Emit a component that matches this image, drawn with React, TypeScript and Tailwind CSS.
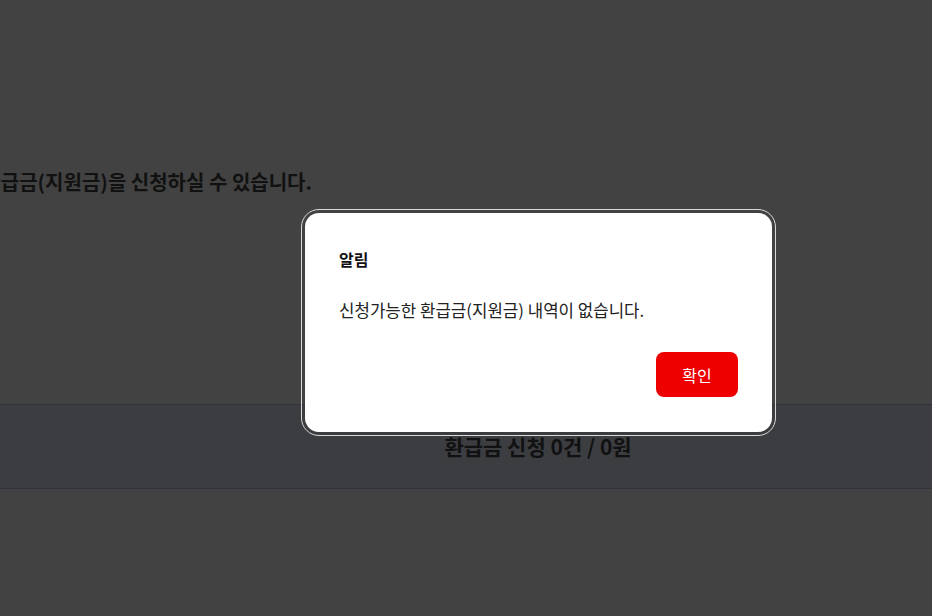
import React from "react";

const font = { fontFamily: '"Noto Sans CJK KR", "Noto Sans", sans-serif' };

export default function App() {
  return (
    <div
      className="relative w-[932px] h-[616px] overflow-hidden bg-[#424242] text-[#111]"
      style={font}
    >
      {/* page behind the dim layer */}
      <div className="flex flex-col">
        <div className="h-[167px]" />
        <div className="flex justify-end w-[312px] overflow-hidden whitespace-nowrap">
          <p className="shrink-0 text-[20px] font-bold leading-[30px]">
            환급금(지원금)을 신청하실 수 있습니다.
          </p>
        </div>
        <div className="h-[207px]" />
        <div className="h-[85px] border-y border-[#30323c] bg-[#3c3d41] flex items-center justify-center pl-[144px]">
          <p className="text-[21px] font-bold mt-[1px]">
            환급금 신청 0건 / 0원
          </p>
        </div>
      </div>

      {/* alert dialog */}
      <div className="absolute left-[305px] top-[213px] w-[467px] h-[219px] rounded-[14px] bg-white outline outline-1 outline-offset-[3px] outline-[#d9d9d9] px-[34px] pt-[34px]">
        <h2 className="text-[16px] font-bold leading-[24px] text-[#111]">알림</h2>
        <p className="mt-[27px] text-[16.8px] leading-[24px] text-[#222]">
          신청가능한 환급금(지원금) 내역이 없습니다.
        </p>
        <div className="mt-[30px] flex justify-end">
          <button className="w-[82px] h-[45px] rounded-[8px] bg-[#ee0000] text-white text-[16px]">
            확인
          </button>
        </div>
      </div>
    </div>
  );
}
